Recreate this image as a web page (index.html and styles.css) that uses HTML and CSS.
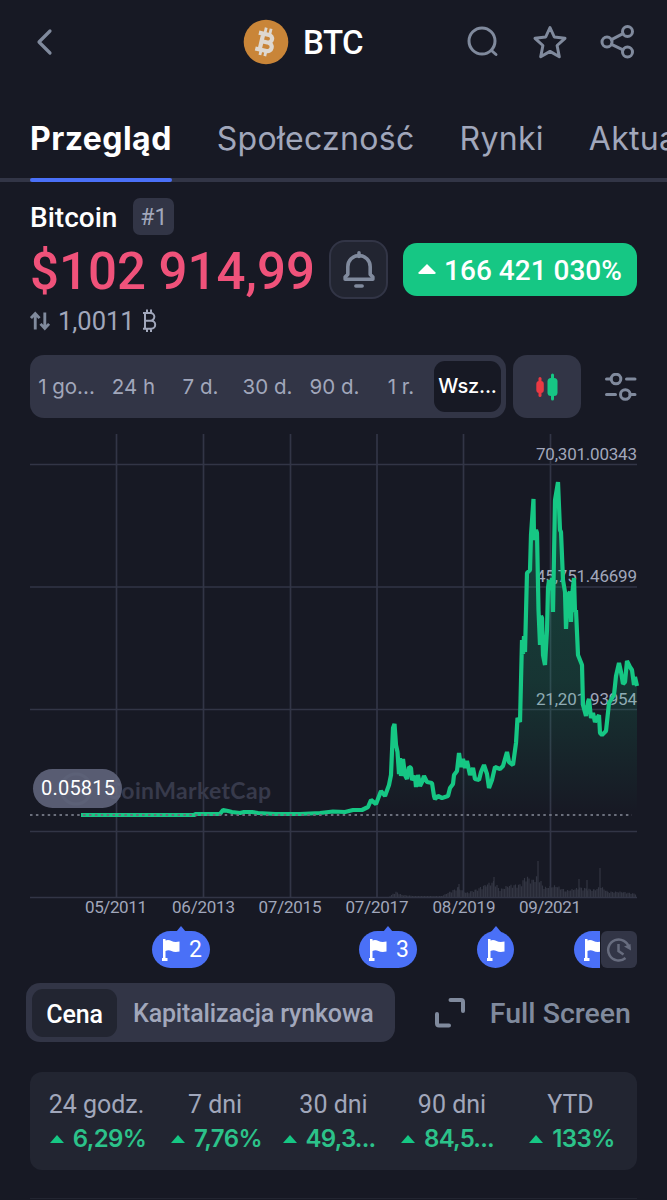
FILE: index.html
```html
<!DOCTYPE html>
<html lang="pl">
<head>
    <meta charset="UTF-8">
    <meta name="viewport" content="width=device-width, initial-scale=1.0">
    <title>BTC - Bitcoin</title>
    <link rel="stylesheet" href="styles.css">
</head>
<body>
    <header class="topbar">
        <svg class="back" width="18" height="28" viewBox="0 0 18 28"><path d="M15 3L4 14l11 11"/></svg>
        <div class="coin">
            <svg width="46" height="46" viewBox="0 0 46 46">
                <circle cx="23" cy="23" r="22.3" fill="#c98538"/>
                <g transform="rotate(13 23 23)" fill="none" stroke="#ded8d0" stroke-width="4.2">
                    <path d="M14 15.500h10.500a3.800 3.800 0 0 1 0 7.600H19M25.500 23.100a4.300 4.300 0 0 1 0 8.600H14M18.500 15v17"/>
                    <path d="M20 9V15M25 9V15M20 31v6M25 31v6" stroke-width="2.800"/>
                </g>
            </svg>
            <h1>BTC</h1>
        </div>
        <div class="actions">
            <svg width="34" height="36" viewBox="0 0 34 36"><circle cx="16" cy="17" r="13"/><path d="M25.500 26.500l4.500 4"/></svg>
            <svg width="36" height="36" viewBox="0 0 36 36"><path d="M18 3.500l4.300 9.500 10.700 1.300-7.900 7.200 2.200 11.300-9.300-5.400-9.300 5.400 2.200-11.300L3 14.300 13.700 13z"/></svg>
            <svg width="36" height="36" viewBox="0 0 36 36"><circle cx="7" cy="18" r="5"/><circle cx="27.500" cy="7.500" r="5"/><circle cx="27.500" cy="28" r="5"/><path d="M11.500 15.700l11.500-6M11.500 20.300l11.500 5.500"/></svg>
        </div>
    </header>

    <nav class="tabs">
        <a class="tab active">Przegląd</a>
        <a class="tab">Społeczność</a>
        <a class="tab">Rynki</a>
        <a class="tab">Aktualności</a>
    </nav>

    <section class="summary">
        <div class="name-row">
            <span class="name">Bitcoin</span>
            <span class="rank">#1</span>
        </div>
        <div class="price-row">
            <span class="price">$102 914,99</span>
            <button class="bell">
                <svg width="34" height="38" viewBox="0 0 38 42"><path d="M19 3v4M3.500 32.500h31v-2.500l-3-3V18.500a12.500 12.500 0 0 0-25 0V27l-3 3zM15.500 40h7"/></svg>
            </button>
            <div class="change">
                <svg width="18" height="10" viewBox="0 0 18 10"><path d="M9 0l8.500 8.500q.5 1.500-1 1.500h-15q-1.500 0-1-1.500z"/></svg>
                <span>166 421 030%</span>
            </div>
        </div>
        <div class="convert">
            <svg width="21" height="20" viewBox="0 0 22 20"><path d="M5.500 19V3M1 7l4.500-4.800L10 7M15.500 1v16M11 13l4.500 4.800L20 13"/></svg>
            <span>1,0011</span>
            <svg class="btc-sign" width="15" height="24" viewBox="0 0 15 24"><path d="M1 4h7.500a3.800 3.800 0 0 1 0 7.700H3M8.500 11.700h.7a4 4 0 0 1 0 8H1M3 4v15.500M5 .5V4M9 .5V4M5 19.500V23M9 19.500V23"/></svg>
        </div>
    </section>

    <section class="toolbar">
        <div class="ranges">
            <span>1 go...</span>
            <span>24 h</span>
            <span>7 d.</span>
            <span>30 d.</span>
            <span>90 d.</span>
            <span>1 r.</span>
            <span class="selected">Wsz...</span>
        </div>
        <button class="candles">
            <svg width="24" height="28" viewBox="0 0 24 28">
                <path d="M5 5.500v17" stroke="#ea3943" stroke-width="3" stroke-linecap="round"/>
                <rect x="1.300" y="8" width="7.500" height="12" rx="3" fill="#ea3943"/>
                <path d="M17.500 2v24" stroke="#16c784" stroke-width="3" stroke-linecap="round"/>
                <rect x="12.500" y="5" width="10" height="18" rx="3.500" fill="#16c784"/>
            </svg>
        </button>
        <svg class="filters" width="32" height="28" viewBox="0 0 32 28"><path d="M1.500 6H6M21.500 6h8.500M1.500 21.500h9M25 21.500h5"/><circle cx="11" cy="6" r="4.800"/><circle cx="20.300" cy="21.500" r="4.800"/></svg>
    </section>

    <section class="chart">
        <svg width="667" height="490" viewBox="0 430 667 490">
            <defs>
                <linearGradient id="fade" x1="0" y1="480" x2="0" y2="812" gradientUnits="userSpaceOnUse">
                    <stop offset="0" stop-color="#16c784" stop-opacity=".25"/>
                    <stop offset=".6" stop-color="#16c784" stop-opacity=".16"/>
                    <stop offset="1" stop-color="#16c784" stop-opacity="0"/>
                </linearGradient>
            </defs>
            <path class="grid" d="M30 464.500H637M30 587H637M30 709.500H637M30 831.500H637M30 897.500H637M116.500 434V897M203.500 434V897M290.500 434V897M377 434V897M463.500 434V897M550.500 434V897"/>
            <path id="volume" class="volume"/>
            <g class="watermark">
                <circle cx="76" cy="789" r="15"/>
                <path d="M69 795v-8l4-3 3 7 3-7 4 3v6q2 4 6 0"/>
                <text x="106" y="799" textLength="165">CoinMarketCap</text>
            </g>
            <g class="axis-y">
                <text x="536" y="459.500" textLength="101">70,301.00343</text>
                <text x="536" y="582" textLength="101">45,751.46699</text>
                <text x="536" y="704.500" textLength="101">21,201.93954</text>
            </g>
            <path id="area" fill="url(#fade)"/>
            <path id="line" class="line"/>
            <path class="baseline" d="M30 815H632"/>
            <g class="tag">
                <rect x="33" y="769" width="89" height="39" rx="19.500"/>
                <text x="41" y="795" textLength="74">0.05815</text>
            </g>
            <g class="axis-x">
                <text x="85" y="912.500" textLength="62">05/2011</text>
                <text x="172" y="912.500" textLength="63">06/2013</text>
                <text x="258.500" y="912.500" textLength="63">07/2015</text>
                <text x="345.500" y="912.500" textLength="63">07/2017</text>
                <text x="432.500" y="912.500" textLength="63">08/2019</text>
                <text x="519" y="912.500" textLength="62">09/2021</text>
            </g>
        </svg>
    </section>

    <!-- flags lie on the time axis -->
    <section class="events">
        <div class="event" style="left: 152px">
            <svg width="18" height="22" viewBox="0 0 18 22"><path d="M1 0h2.500v1.500q3-1 6 .5t8 .5v10q-5 1-8-.5t-6 0V19h2v3H0v-3h1z"/></svg>
            <span>2</span>
        </div>
        <div class="event" style="left: 359px">
            <svg width="18" height="22" viewBox="0 0 18 22"><path d="M1 0h2.500v1.500q3-1 6 .5t8 .5v10q-5 1-8-.5t-6 0V19h2v3H0v-3h1z"/></svg>
            <span>3</span>
        </div>
        <div class="event single" style="left: 477px">
            <svg width="18" height="22" viewBox="0 0 18 22"><path d="M1 0h2.500v1.500q3-1 6 .5t8 .5v10q-5 1-8-.5t-6 0V19h2v3H0v-3h1z"/></svg>
        </div>
        <div class="event cut" style="left: 574px">
            <svg width="18" height="22" viewBox="0 0 18 22"><path d="M1 0h2.500v1.500q3-1 6 .5t8 .5v10q-5 1-8-.5t-6 0V19h2v3H0v-3h1z"/></svg>
        </div>
        <button class="history">
            <svg width="26" height="26" viewBox="0 0 26 26"><path d="M19.500 21A10.500 10.500 0 1 1 23 11M12.500 7v7l5 3.500"/><path class="tip" d="M18 9.500l6.500-2.500.5 6.500z"/></svg>
        </button>
    </section>

    <section class="modes">
        <div class="switch">
            <span class="selected">Cena</span>
            <span class="mode">Kapitalizacja rynkowa</span>
        </div>
        <div class="fullscreen">
            <svg width="32" height="32" viewBox="0 0 32 32"><path d="M16.500 3H27a2 2 0 0 1 2 2V14M3 17v9.500a2 2 0 0 0 2 2h10"/></svg>
            <span>Full Screen</span>
        </div>
    </section>

    <section class="stats">
        <div class="stat"><span>24 godz.</span><b>6,29%</b></div>
        <div class="stat"><span>7 dni</span><b>7,76%</b></div>
        <div class="stat"><span>30 dni</span><b class="long">49,3...</b></div>
        <div class="stat"><span>90 dni</span><b class="long">84,5...</b></div>
        <div class="stat"><span>YTD</span><b>133%</b></div>
    </section>
    <div class="divider"></div>

    <script src="chart.js"></script>
</body>
</html>
```
FILE: styles.css
```css
* {
    box-sizing: border-box;
}
body {
    margin: 0;
    width: 667px;
    height: 1200px;
    overflow: hidden;
    background: #171924;
    color: #fff;
    font-family: Roboto, sans-serif;
}
svg {
    display: block;
    flex: none;
}
button {
    border: none;
    padding: 0;
    display: flex;
    align-items: center;
    justify-content: center;
}
.topbar {
    display: grid;
    grid-template-columns: 208px auto 1fr;
    align-items: center;
    height: 84px;
    padding: 0 31px 0 35px;
}
.back {
    fill: none;
    stroke: #808a9d;
    stroke-width: 3.2;
    stroke-linecap: round;
    stroke-linejoin: round;
}
.coin {
    display: flex;
    align-items: center;
    gap: 14px;
    margin-top: -1px;
}
.coin h1 {
    margin: 2px 0 0;
    font-size: 33px;
    font-weight: 500;
    letter-spacing: -0.5px;
}
.actions {
    display: flex;
    justify-content: flex-end;
    gap: 32px;
    fill: none;
    stroke: #808a9d;
    stroke-width: 3;
    stroke-linecap: round;
    stroke-linejoin: round;
}
.tabs {
    display: flex;
    gap: 45px;
    height: 98px;
    padding: 0 0 0 30px;
    border-bottom: 4px solid #323546;
    font-family: Inter, sans-serif;
    font-size: 32px;
    line-height: 40px;
    color: #a1a7bb;
    white-space: nowrap;
    overflow: hidden;
    position: relative;
}
.tab {
    height: 94px;
    padding-top: 35px;
    letter-spacing: 0.3px;
}
.tab.active {
    color: #fff;
    font-weight: 700;
    letter-spacing: 0.45px;
}
/* the marker covers the nav's own border */
.tabs + .summary::before {
    content: "";
    position: absolute;
    top: 178px;
    left: 30px;
    width: 142px;
    height: 4px;
    border-radius: 2px;
    background: #4a70f7;
}
.summary {
    padding: 16px 30px 0;
    height: 173px;
}
.name-row {
    display: flex;
    align-items: center;
    gap: 16px;
    height: 37px;
    font-size: 28px;
    font-weight: 500;
}
.name {
    padding-top: 2px;
}
.rank {
    width: 41px;
    height: 37px;
    border-radius: 7px;
    background: #323546;
    color: #a1a7bb;
    font-size: 23px;
    font-weight: 400;
    line-height: 39px;
    text-align: center;
}
.price-row {
    display: flex;
    align-items: center;
    height: 68px;
}
.price {
    width: 299px;
    padding-top: 5px;
    color: #f0527a;
    font-size: 51px;
    font-weight: 500;
    white-space: nowrap;
}
.bell {
    width: 59px;
    height: 59px;
    border: 2px solid #323546;
    border-radius: 16px;
    background: #222531;
}
.bell svg {
    fill: none;
    stroke: #808a9d;
    stroke-width: 4;
    stroke-linecap: round;
    stroke-linejoin: round;
}
.change {
    display: flex;
    align-items: center;
    justify-content: center;
    gap: 8px;
    width: 234px;
    height: 53px;
    margin-left: 15px;
    border-radius: 14px;
    background: #16c784;
    fill: #fff;
    font-size: 28px;
    font-weight: 500;
}
.change span {
    padding-top: 2px;
}
.convert {
    display: flex;
    align-items: center;
    gap: 7px;
    height: 36px;
    color: #a1a7bb;
    font-size: 25.5px;
}
.convert svg {
    fill: none;
    stroke: #808a9d;
    stroke-width: 3;
}
.convert .btc-sign {
    stroke: #a1a7bb;
    stroke-width: 2;
}
.toolbar {
    display: flex;
    align-items: center;
    height: 63px;
    padding-left: 30px;
}
.ranges {
    display: grid;
    grid-template-columns: 73px 61px 73px 61px 73px 60px 67px;
    align-items: center;
    width: 476px;
    height: 63px;
    border-radius: 14px;
    background: #323546;
    color: #a1a7bb;
    font-family: Inter, sans-serif;
    font-size: 20.5px;
    text-align: center;
    white-space: nowrap;
}
.ranges .selected {
    width: 67px;
    height: 51px;
    margin-left: 3px;
    border-radius: 11px;
    background: #171924;
    color: #fff;
    font-size: 20px;
    font-weight: 500;
    line-height: 51px;
    letter-spacing: -0.2px;
}
.candles {
    width: 68px;
    height: 63px;
    margin-left: 7px;
    border-radius: 14px;
    background: #323546;
}
.filters {
    margin-left: 24px;
    fill: none;
    stroke: #808a9d;
    stroke-width: 3;
    stroke-linecap: round;
}
.chart {
    margin-top: 12px;
    height: 490px;
}
.grid {
    fill: none;
    stroke: #323546;
    stroke-width: 1.7;
}
.volume {
    fill: none;
    stroke: #323542;
    stroke-width: 1.2;
}
.watermark {
    fill: none;
    stroke: #323546;
    stroke-width: 3;
}
.watermark text {
    fill: #373a4b;
    stroke: none;
    font-family: Lato, sans-serif;
    font-size: 23px;
    font-weight: 700;
}
.axis-y, .axis-x {
    fill: #a1a7bb;
    font-size: 17px;
}
.line {
    fill: none;
    stroke: #16c784;
    stroke-width: 4.2;
    stroke-linejoin: bevel;
}
.baseline {
    stroke: #6b6f7c;
    stroke-width: 1.8;
    stroke-dasharray: 2.5 3.4;
}
.tag rect {
    fill: #646980;
    fill-opacity: 0.85;
}
.tag text {
    fill: #fff;
    font-size: 20px;
}
.events {
    position: relative;
    height: 63px;
}
.event {
    position: absolute;
    top: 11px;
    display: flex;
    align-items: center;
    gap: 9px;
    width: 58px;
    height: 37px;
    padding-left: 10px;
    border-radius: 19px;
    background: #4a70f7;
    fill: #fff;
    font-size: 23px;
}
.event::before {
    content: "";
    position: absolute;
    top: -5px;
    left: 50%;
    margin-left: -5px;
    border: 5px solid transparent;
    border-top: none;
    border-bottom: 6px solid #4a70f7;
}
.event.single {
    width: 37px;
}
.event.cut {
    width: 26px;
    border-radius: 19px 0 0 19px;
    overflow: hidden;
}
.event.cut::before {
    display: none;
}
.history {
    position: absolute;
    top: 11px;
    left: 601px;
    width: 36px;
    height: 37px;
    border-radius: 6px;
    background: #323546;
}
.history svg {
    fill: none;
    stroke: #676c7e;
    stroke-width: 2.5;
}
.history .tip {
    fill: #676c7e;
    stroke: none;
}
.modes {
    display: flex;
    align-items: center;
    justify-content: space-between;
    height: 59px;
    padding: 0 36px 0 26px;
}
.switch {
    display: flex;
    align-items: center;
    width: 369px;
    height: 59px;
    padding-left: 6px;
    border-radius: 14px;
    background: #323546;
    color: #a1a7bb;
    font-size: 25px;
    font-weight: 500;
    letter-spacing: -0.15px;
}
.switch .selected {
    width: 85px;
    height: 48px;
    margin-right: 16px;
    border-radius: 11px;
    background: #222531;
    color: #fff;
    line-height: 51px;
    text-align: center;
}
.mode, .fullscreen span {
    padding-top: 2px;
}
.fullscreen {
    display: flex;
    align-items: center;
    gap: 24px;
    color: #808a9d;
    font-size: 28.5px;
    font-weight: 500;
}
.fullscreen svg {
    fill: none;
    stroke: #808a9d;
    stroke-width: 4;
    stroke-linecap: round;
}
.stats {
    display: grid;
    grid-template-columns: repeat(5, 118.5px);
    justify-content: center;
    align-content: center;
    height: 98px;
    margin: 30px 30px 0;
    padding-top: 2px;
    border-radius: 12px;
    background: #222531;
}
.stat {
    display: flex;
    flex-direction: column;
    align-items: center;
    color: #a1a7bb;
    font-size: 25px;
    line-height: 34px;
}
.stat b {
    display: flex;
    align-items: center;
    gap: 9px;
    padding-left: 3px;
    color: #2cc28a;
    font-family: Inter, sans-serif;
    font-size: 24px;
    font-weight: 600;
    letter-spacing: -0.6px;
}
.stat .long {
    padding: 0 9px 0 0;
    letter-spacing: -0.8px;
}
.stat b::before {
    content: "";
    border: 7px solid transparent;
    border-top: none;
    border-bottom: 8px solid #16c784;
}
.divider {
    height: 1px;
    margin: 28px 30px 0;
    background: #222531;
}
```
FILE: chart.js
```js
var points = [
    [81, 815], [120, 815], [194, 815], [196, 814], [220, 814], [223, 810], [228, 811], [232, 812],
    [240, 813], [244, 812], [252, 812], [258, 813], [275, 814], [300, 814], [320, 813], [333, 811.5],
    [345, 812], [353, 810], [362, 810], [368, 807], [371, 800], [376, 804], [381, 791], [385, 796],
    [389, 785], [391, 775], [393, 728], [394.5, 724], [396, 745], [397.5, 752], [399, 774], [400, 758],
    [401, 776], [403, 759], [405, 775], [407, 779], [409, 767], [411, 768], [412, 780], [415, 776],
    [416, 787], [418, 775], [420, 786], [422, 782], [424, 776], [427, 782], [432, 783], [434, 796],
    [435, 799], [438, 796], [442, 798], [448, 796], [450, 788], [453, 784], [454, 775], [457, 771],
    [459, 753], [461, 767], [463, 759], [465, 768], [467, 761], [470, 775], [473, 768], [475, 779],
    [479, 780], [481, 772], [484, 765], [487, 774], [489, 788], [492, 780], [495, 767], [500, 769],
    [503, 766], [507, 752], [509, 762], [513, 765], [516, 743], [517.5, 718], [520, 722], [522, 640],
    [523, 654], [524, 636], [525, 652], [527, 573], [530, 570], [531, 535], [533.5, 499], [534, 540],
    [536, 530], [537, 533], [538.5, 610], [540, 645], [541, 616], [542, 618], [543, 655], [545, 665],
    [547, 630], [548, 588], [549, 580], [551, 590], [552, 578], [553, 612], [555, 500], [558, 482],
    [560, 530], [561, 532], [563, 580], [565, 592], [566, 629], [568, 595], [570, 592], [571, 622],
    [572, 596], [574, 578], [575, 612], [576, 610], [578, 655], [582, 665], [583, 705], [586, 716],
    [588, 702], [589, 699], [591, 718], [593, 713], [595, 722], [599, 715], [600, 733], [602, 735],
    [606, 731], [609, 703], [614, 695], [616, 676], [619, 663], [621, 672], [623, 684], [625, 682],
    [627, 661], [630, 667], [632, 670], [634, 685], [635, 677], [637, 686]
];

// envelope of the volume bars: x, height
var volume = [
    [390, 1], [396, 5], [402, 2], [414, 1], [442, 1], [450, 5], [458, 9], [466, 4], [476, 7], [486, 12],
    [494, 15], [500, 7], [508, 11], [520, 12], [526, 20], [532, 16], [538, 20], [544, 9], [556, 11],
    [566, 6], [580, 9], [594, 7], [601, 10], [608, 5], [622, 5], [637, 3]
];

var line = 'M' + points.map(p => p.join(' ')).join('L');
document.getElementById('line').setAttribute('d', line);
document.getElementById('area').setAttribute('d', line + 'V815H81Z');

var bars = '';
for (var i = 0; i < volume.length - 1; i++) {
    var a = volume[i], b = volume[i + 1];
    for (var x = a[0]; x < b[0]; x += 1.5) {
        var h = a[1] + (b[1] - a[1]) * (x - a[0]) / (b[0] - a[0]);
        h *= 0.75 + 0.35 * Math.abs(Math.sin(x * 7));
        bars += 'M' + x + ' 897v-' + h.toFixed(1);
    }
}
bars += 'M538 897v-36M579 897v-18M587 897v-17M600 897v-29M494 897v-20M459 897v-13';
document.getElementById('volume').setAttribute('d', bars);
```
